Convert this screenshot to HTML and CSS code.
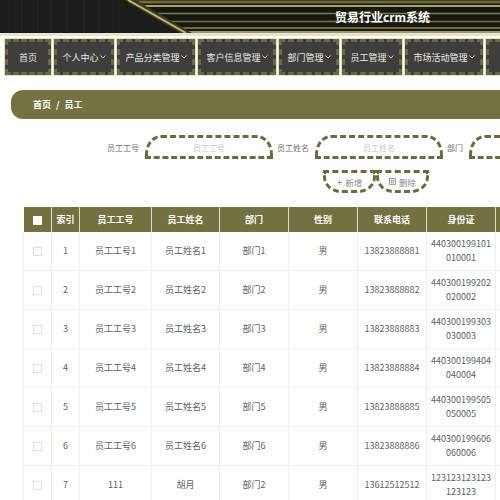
FILE: index.html
```html
<!DOCTYPE html>
<html lang="zh">
<head>
    <meta charset="UTF-8">
    <meta name="viewport" content="width=device-width, initial-scale=1.0">
    <title>贸易行业crm系统</title>
    <link rel="stylesheet" href="styles.css">
</head>
<body>
<div class="page">
    <div class="header">
        <svg class="header-art" viewBox="0 0 752 33" width="752" height="33">
            <rect width="752" height="33" fill="#1c1e19"/>
            <g stroke="#252822" stroke-width="1">
                <line x1="9" y1="0" x2="9" y2="33"/>
                <line x1="22" y1="0" x2="22" y2="33"/>
                <line x1="38" y1="0" x2="38" y2="33"/>
                <line x1="51" y1="0" x2="51" y2="33"/>
                <line x1="67" y1="0" x2="67" y2="33"/>
                <line x1="84" y1="0" x2="84" y2="33"/>
                <line x1="99" y1="0" x2="99" y2="33"/>
                <line x1="113" y1="0" x2="113" y2="33"/>
            </g>
            <polygon points="128,0 752,0 752,33 186,33" fill="#161813"/>
            <line x1="130" y1="2" x2="752" y2="2" stroke="#6f6b3c" stroke-width="3"/>
            <line x1="137" y1="6" x2="752" y2="6" stroke="#aea461" stroke-width="2"/>
            <line x1="151" y1="13.5" x2="752" y2="13.5" stroke="#7f7a48" stroke-width="1.5"/>
            <line x1="165" y1="21.5" x2="752" y2="21.5" stroke="#77723f" stroke-width="1.5"/>
            <line x1="176" y1="28" x2="752" y2="28" stroke="#8b8550" stroke-width="1.5"/>
            <line x1="183" y1="32" x2="752" y2="32" stroke="#a39b5c" stroke-width="2"/>
            <polygon points="124,0 136,0 192,33 180,33" fill="#3a3a26"/>
            <line x1="128" y1="0" x2="186" y2="33" stroke="#c2b76b" stroke-width="2"/>
        </svg>
        <h1 class="title">贸易行业crm系统</h1>
    </div>
    <div class="strip"></div>

    <div class="nav">
        <div class="nav-item">首页</div>
        <div class="nav-item">个人中心<svg class="chev" viewBox="0 0 6 4"><path d="M0.5 0.5 L3 3 L5.5 0.5"/></svg></div>
        <div class="nav-item">产品分类管理<svg class="chev" viewBox="0 0 6 4"><path d="M0.5 0.5 L3 3 L5.5 0.5"/></svg></div>
        <div class="nav-item">客户信息管理<svg class="chev" viewBox="0 0 6 4"><path d="M0.5 0.5 L3 3 L5.5 0.5"/></svg></div>
        <div class="nav-item">部门管理<svg class="chev" viewBox="0 0 6 4"><path d="M0.5 0.5 L3 3 L5.5 0.5"/></svg></div>
        <div class="nav-item">员工管理<svg class="chev" viewBox="0 0 6 4"><path d="M0.5 0.5 L3 3 L5.5 0.5"/></svg></div>
        <div class="nav-item">市场活动管理<svg class="chev" viewBox="0 0 6 4"><path d="M0.5 0.5 L3 3 L5.5 0.5"/></svg></div>
        <div class="nav-item nav-more"></div>
    </div>

    <div class="main">
        <div class="breadcrumb">
            <span>首页</span><span class="sep">/</span><span>员工</span>
        </div>

        <div class="search">
            <label>员工工号</label>
            <div class="input">员工工号</div>
            <label>员工姓名</label>
            <div class="input">员工姓名</div>
            <label>部门</label>
            <div class="input"></div>
        </div>

        <div class="actions">
            <div class="btn"><span class="plus">+</span>新增</div>
            <div class="btn"><svg class="del" viewBox="0 0 8 8"><rect x="0.5" y="0.5" width="7" height="7"/><rect x="2.5" y="2.5" width="3" height="3"/></svg>删除</div>
        </div>

        <table class="grid">
            <colgroup>
                <col style="width:28px"><col style="width:28px"><col style="width:72px"><col style="width:68px">
                <col style="width:69px"><col style="width:69px"><col style="width:69px"><col style="width:69px"><col style="width:69px">
            </colgroup>
            <thead>
                <tr>
                    <th><span class="check check-head"></span></th>
                    <th>索引</th><th>员工工号</th><th>员工姓名</th><th>部门</th>
                    <th>性别</th><th>联系电话</th><th>身份证</th><th></th>
                </tr>
            </thead>
            <tbody id="rows"></tbody>
        </table>
    </div>
</div>

<script>
    var data = [
        ["员工工号1", "员工姓名1", "部门1", "男", "13823888881", "440300199101010001"],
        ["员工工号2", "员工姓名2", "部门2", "男", "13823888882", "440300199202020002"],
        ["员工工号3", "员工姓名3", "部门3", "男", "13823888883", "440300199303030003"],
        ["员工工号4", "员工姓名4", "部门4", "男", "13823888884", "440300199404040004"],
        ["员工工号5", "员工姓名5", "部门5", "男", "13823888885", "440300199505050005"],
        ["员工工号6", "员工姓名6", "部门6", "男", "13823888886", "440300199606060006"],
        ["111", "胡月", "部门2", "男", "13612512512", "123123123123123123"]
    ];

    var html = "";
    for (var i = 0; i < data.length; i++) {
        var r = data[i];
        html += `<tr><td><span class="check"></span></td><td>${i + 1}</td>`;
        for (var j = 0; j < r.length; j++) {
            html += `<td>${r[j]}</td>`;
        }
        html += "<td></td></tr>";
    }
    document.getElementById("rows").innerHTML = html;
</script>
</body>
</html>
```

FILE: styles.css
```css
html, body {
    margin: 0;
    padding: 0;
    overflow: hidden;
    background: #fff;
}
body {
    font-family: "Noto Sans CJK SC", "Liberation Sans", sans-serif;
    color: #606266;
}
.page {
    width: 752px;
}
.header {
    position: relative;
    height: 33px;
}
.header-art {
    display: block;
}
.title {
    position: absolute;
    left: 335px;
    top: 0;
    margin: 0;
    line-height: 33px;
    font-size: 12px;
    font-weight: bold;
    color: #fff;
}
.strip {
    height: 3px;
    background: #e6e4d2;
}
.nav {
    display: flex;
    gap: 3px;
    padding: 3px 5px 0;
    background: #fbfbf9;
}
.nav-item {
    flex: none;
    display: flex;
    align-items: center;
    justify-content: center;
    gap: 1px;
    box-sizing: border-box;
    min-width: 46px;
    height: 36px;
    padding: 0 5.5px;
    background: #3e3e3c;
    border: 3px dashed #6a6945;
    box-shadow: 0 0 0 1px #e2e0c4;
    color: #e9e9e4;
    font-size: 9px;
    white-space: nowrap;
}
.nav-more {
    width: 61px;
}
.chev {
    width: 6px;
    height: 4px;
    fill: none;
    stroke: #e9e9e4;
    stroke-width: 0.9;
}
.main {
    padding-top: 15px;
}
.breadcrumb {
    display: flex;
    align-items: center;
    gap: 5px;
    height: 29px;
    margin-left: 11px;
    padding-left: 22px;
    background: #747241;
    border-radius: 12px 0 0 12px;
    color: #fff;
    font-size: 9px;
    font-weight: bold;
}
.search {
    display: flex;
    align-items: center;
    margin-top: 16px;
    padding-left: 107px;
    font-size: 8px;
}
.search label {
    color: #707070;
    margin-right: 6px;
    white-space: nowrap;
}
.search label + .input {
    margin-right: 4px;
}
.input {
    flex: none;
    box-sizing: border-box;
    width: 128px;
    height: 24px;
    display: flex;
    align-items: center;
    justify-content: center;
    border: 3px dashed #6c6a45;
    border-radius: 16px 16px 0 0 / 19px 19px 0 0;
    color: #c6c8cc;
}
.actions {
    display: flex;
    justify-content: center;
    margin-top: 11px;
}
.btn {
    box-sizing: border-box;
    width: 53px;
    height: 23px;
    display: flex;
    align-items: center;
    justify-content: center;
    gap: 3px;
    border: 3px dashed #6c6a45;
    border-radius: 0 0 18px 18px / 0 0 16px 16px;
    color: #8a8a8a;
    font-size: 8.5px;
}
.plus {
    font-size: 10px;
    line-height: 1;
}
.del {
    width: 7px;
    height: 7px;
    fill: none;
    stroke: #8a8a8a;
    stroke-width: 0.9;
}
.grid {
    margin: 14px 0 0 23px;
    border-collapse: collapse;
    table-layout: fixed;
    width: 541px;
    font-size: 9px;
}
.grid th {
    height: 25px;
    padding: 0 4px;
    background: #737142;
    color: #fff;
    font-weight: bold;
    border-right: 1px solid #dddccb;
    text-align: center;
}
.grid td {
    height: 38px;
    padding: 0 4px;
    text-align: center;
    border-right: 1px solid #eeeff2;
    border-bottom: 1px solid #eeeff2;
    word-break: break-all;
    line-height: 1.55;
}
.grid td:first-child {
    border-left: 1px solid #eeeff2;
}
.check {
    display: inline-block;
    vertical-align: middle;
    box-sizing: border-box;
    width: 9px;
    height: 9px;
    border: 1px solid #dcdfe6;
    background: #fff;
}
.check-head {
    border-color: #fff;
}
```
